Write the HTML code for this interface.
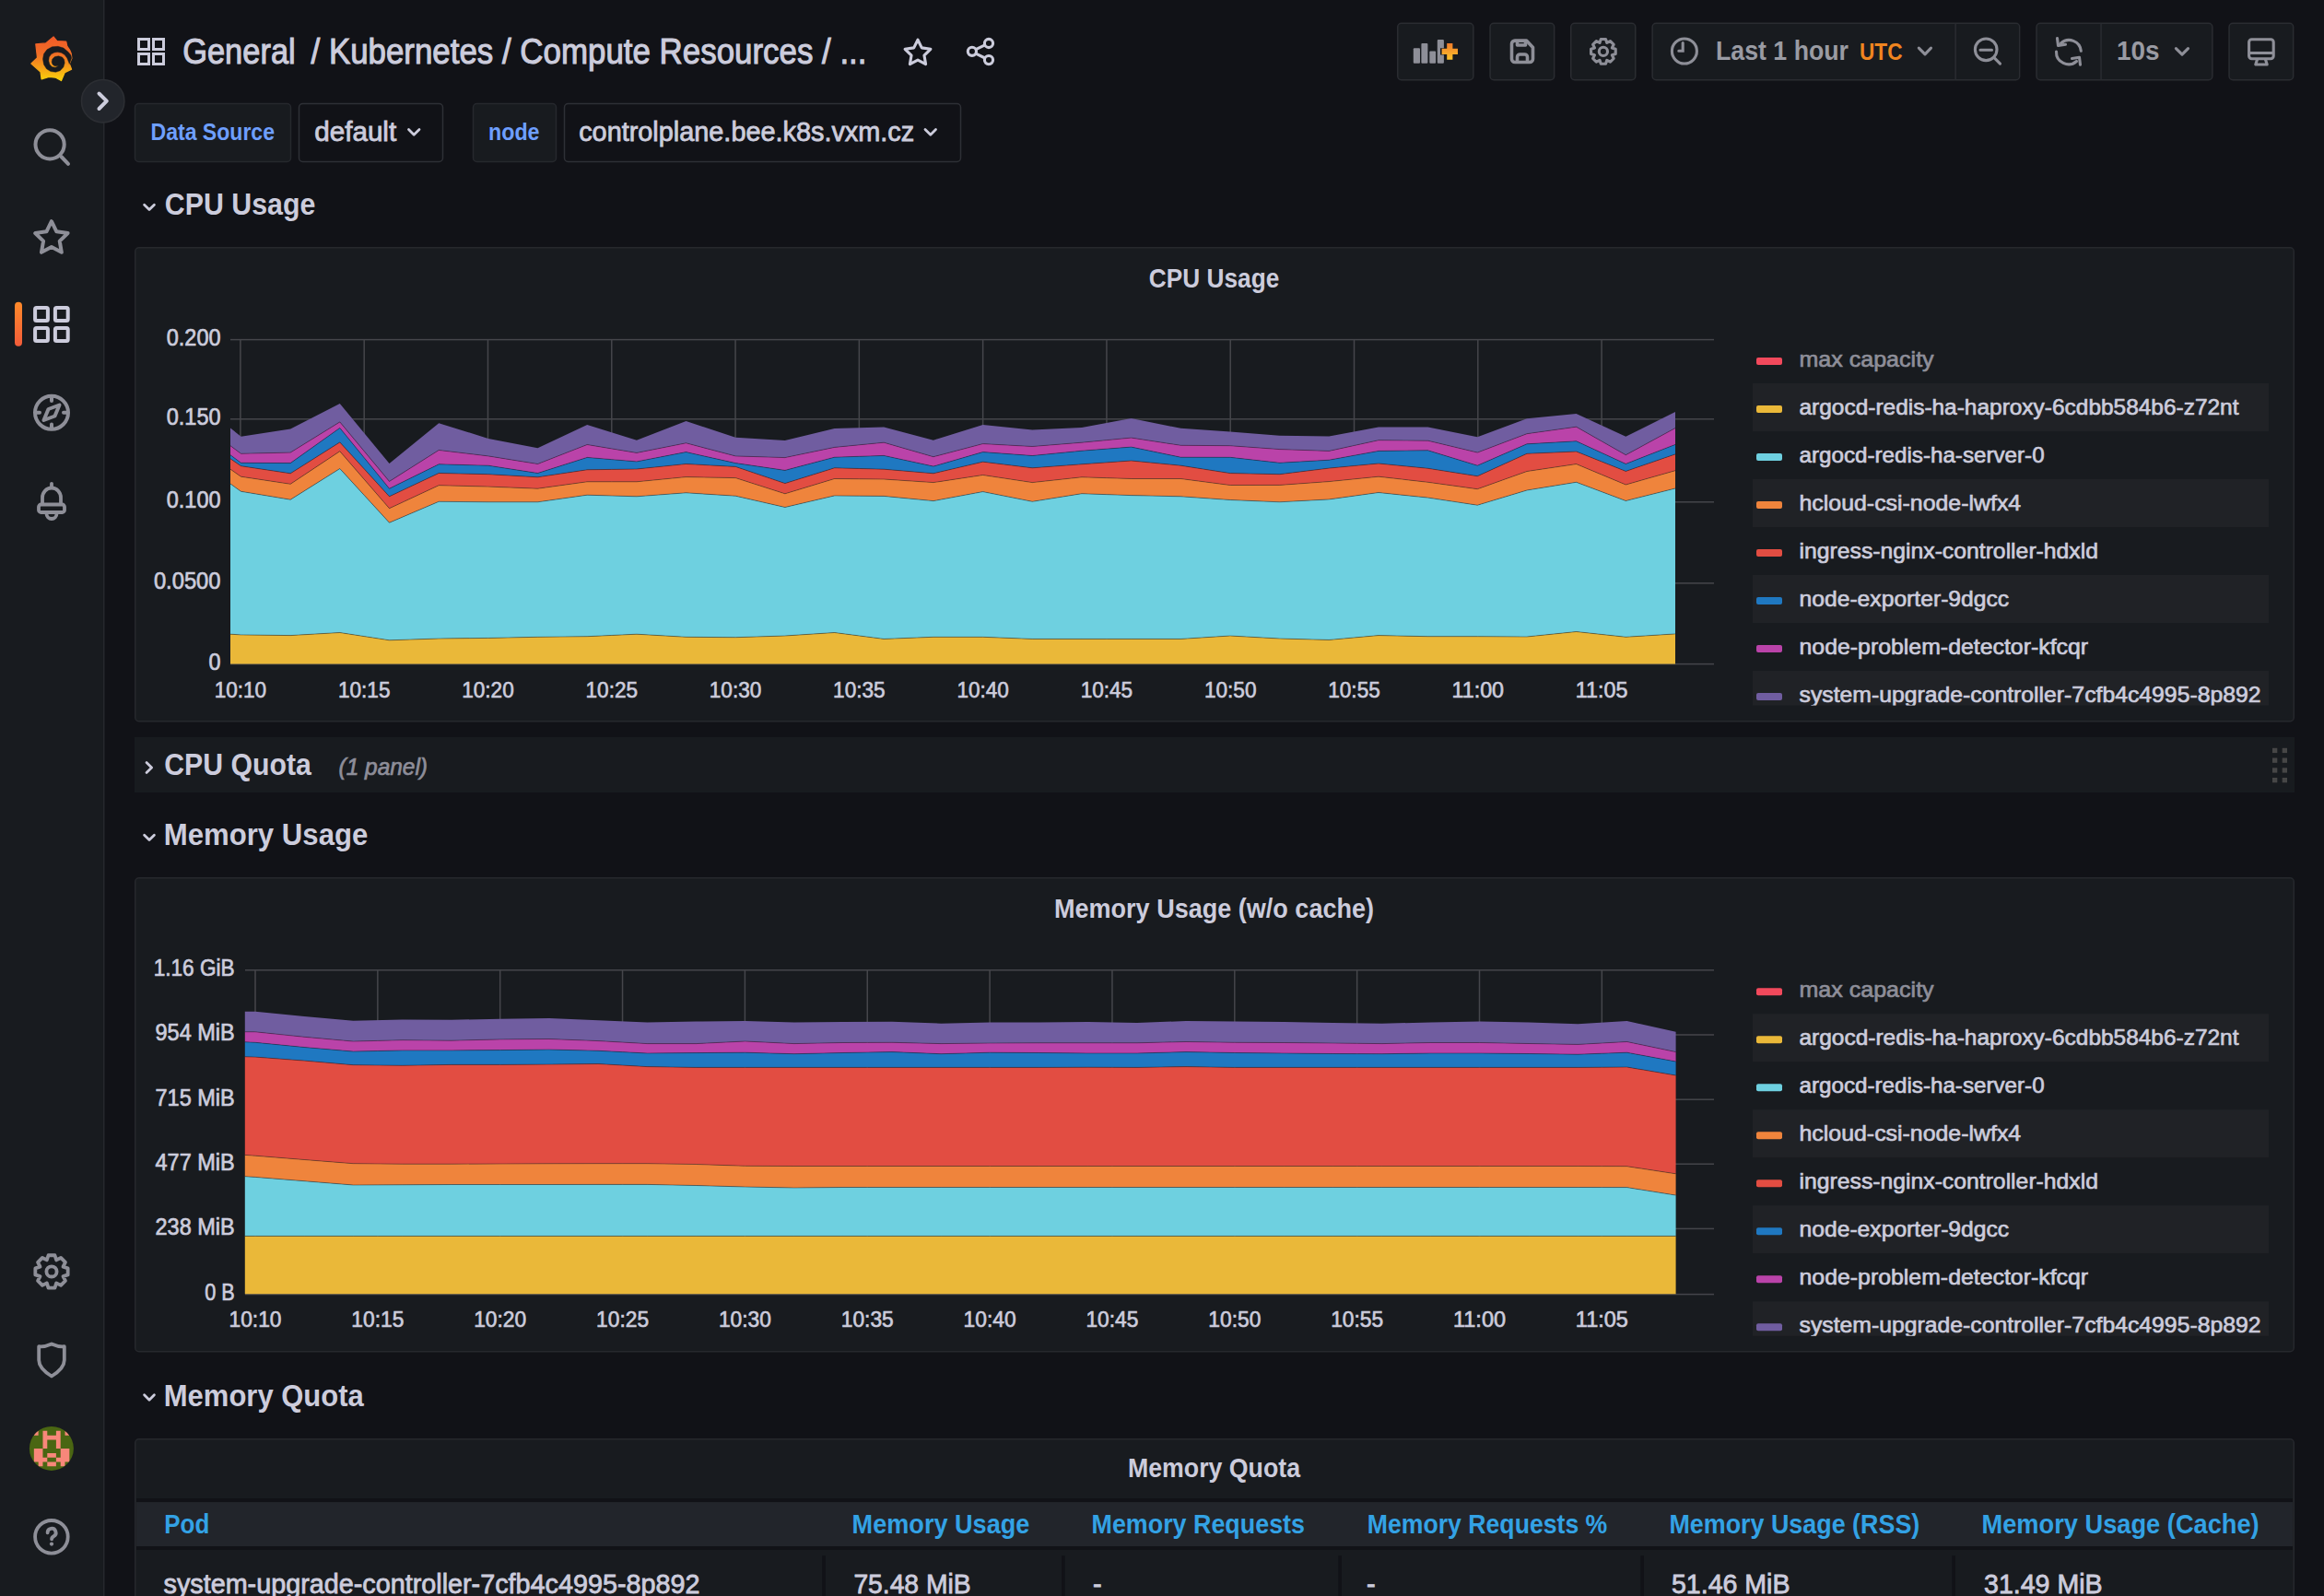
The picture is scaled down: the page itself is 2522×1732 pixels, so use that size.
<!DOCTYPE html>
<html><head><meta charset="utf-8"><title>Kubernetes / Compute Resources</title>
<style>html,body{margin:0;padding:0;background:#111217;overflow:hidden;width:2522px;height:1732px}svg{display:block}text{font-family:"Liberation Sans", sans-serif}</style>
</head><body><svg width="2522" height="1732" viewBox="0 0 2522 1732" font-family='"Liberation Sans", sans-serif'><rect x="0" y="0" width="2522" height="1732" fill="#111217"/><rect x="0" y="0" width="112" height="1732" fill="#181b1f"/><rect x="112" y="0" width="1.5" height="1732" fill="#26282d"/><g fill="none" stroke="#ccccdc" stroke-width="3"><rect x="150.5" y="42.5" width="11" height="11"/><rect x="166.5" y="42.5" width="11" height="11"/><rect x="150.5" y="58.5" width="11" height="11"/><rect x="166.5" y="58.5" width="11" height="11"/></g><text x="198.20" y="68.5" font-size="39" fill="#ccccdc" font-weight="normal" font-style="normal" text-anchor="start" textLength="122.50" lengthAdjust="spacingAndGlyphs"  stroke="#ccccdc" stroke-width="1.09">General</text><text x="337.50" y="68.5" font-size="39" fill="#ccccdc" font-weight="normal" font-style="normal" text-anchor="start" textLength="603.00" lengthAdjust="spacingAndGlyphs"  stroke="#ccccdc" stroke-width="1.09">/ Kubernetes / Compute Resources / ...</text><rect x="146.5" y="112.5" width="169" height="63" rx="4" fill="#181b1f" stroke="#26282d" stroke-width="1.5"/><text x="163.50" y="152" font-size="25.5" fill="#6e9fff" font-weight="bold" font-style="normal" text-anchor="start" textLength="134.50" lengthAdjust="spacingAndGlyphs" >Data Source</text><rect x="324.5" y="112.5" width="156" height="63" rx="4" fill="#111217" stroke="#2e3036" stroke-width="1.5"/><text x="341.20" y="152.5" font-size="29" fill="#ccccdc" font-weight="normal" font-style="normal" text-anchor="start" textLength="89.00" lengthAdjust="spacingAndGlyphs"  stroke="#ccccdc" stroke-width="0.81">default</text><rect x="513.5" y="112.5" width="90" height="63" rx="4" fill="#181b1f" stroke="#26282d" stroke-width="1.5"/><text x="530.00" y="152" font-size="25.5" fill="#6e9fff" font-weight="bold" font-style="normal" text-anchor="start" textLength="55.50" lengthAdjust="spacingAndGlyphs" >node</text><rect x="612.5" y="112.5" width="430" height="63" rx="4" fill="#111217" stroke="#2e3036" stroke-width="1.5"/><text x="628.20" y="152.5" font-size="29" fill="#ccccdc" font-weight="normal" font-style="normal" text-anchor="start" textLength="364.00" lengthAdjust="spacingAndGlyphs"  stroke="#ccccdc" stroke-width="0.81">controlplane.bee.k8s.vxm.cz</text><text x="178.80" y="232.8" font-size="32.5" fill="#ccccdc" font-weight="bold" font-style="normal" text-anchor="start" textLength="163.50" lengthAdjust="spacingAndGlyphs" >CPU Usage</text><rect x="146.75" y="268.75" width="2342.5" height="514" rx="4" fill="#181b1f" stroke="#26282d" stroke-width="1.5"/><text x="1246.80" y="311.8" font-size="29.5" fill="#ccccdc" font-weight="bold" font-style="normal" text-anchor="start" textLength="141.50" lengthAdjust="spacingAndGlyphs" >CPU Usage</text><rect x="146" y="800" width="2344" height="60" fill="#181b1f"/><text x="178.30" y="841.4" font-size="33" fill="#ccccdc" font-weight="bold" font-style="normal" text-anchor="start" textLength="159.50" lengthAdjust="spacingAndGlyphs" >CPU Quota</text><text x="367.50" y="841.4" font-size="26" fill="#8e8e99" font-weight="normal" font-style="italic" text-anchor="start" textLength="96.50" lengthAdjust="spacingAndGlyphs"  stroke="#8e8e99" stroke-width="0.73">(1 panel)</text><text x="177.80" y="917.3" font-size="33" fill="#ccccdc" font-weight="bold" font-style="normal" text-anchor="start" textLength="221.50" lengthAdjust="spacingAndGlyphs" >Memory Usage</text><rect x="146.75" y="952.75" width="2342.5" height="514" rx="4" fill="#181b1f" stroke="#26282d" stroke-width="1.5"/><text x="1144.00" y="995.5" font-size="29.8" fill="#ccccdc" font-weight="bold" font-style="normal" text-anchor="start" textLength="347.00" lengthAdjust="spacingAndGlyphs" >Memory Usage (w/o cache)</text><text x="177.80" y="1526" font-size="33" fill="#ccccdc" font-weight="bold" font-style="normal" text-anchor="start" textLength="217.00" lengthAdjust="spacingAndGlyphs" >Memory Quota</text><rect x="146.75" y="1561.75" width="2342.5" height="400" rx="4" fill="#181b1f" stroke="#26282d" stroke-width="1.5"/><text x="1224.00" y="1603.3" font-size="30" fill="#ccccdc" font-weight="bold" font-style="normal" text-anchor="start" textLength="187.00" lengthAdjust="spacingAndGlyphs" >Memory Quota</text><defs><linearGradient id="glogo" x1="0" y1="0" x2="0" y2="1"><stop offset="0" stop-color="#f05a28"/><stop offset="0.4" stop-color="#f16f26"/><stop offset="1" stop-color="#fbd20a"/></linearGradient><linearGradient id="gbar" x1="0" y1="0" x2="0" y2="1"><stop offset="0" stop-color="#ff8a2a"/><stop offset="1" stop-color="#f25c3a"/></linearGradient><linearGradient id="gplus" x1="0" y1="0" x2="0" y2="1"><stop offset="0" stop-color="#f07b2a"/><stop offset="1" stop-color="#fcc42c"/></linearGradient></defs><path d="M58.07,40.0 L61.9,44.6 L71.75,45.1 L72.8,50.1 L75.5,54.0 L77.2,58.0 L77.9,63.2 L75.3,69.3 L77.6,75.1 L70.35,78.6 L66.5,87.6 L60.5,84.2 L53.2,83.4 L45.1,85.8 L44.0,78.1 L33.9,69.0 L40.5,62.7 L38.8,47.9 L49.6,46.9Z" fill="url(#glogo)" stroke="url(#glogo)" stroke-width="1.2" stroke-linejoin="round"/><path d="M77.66,62.9 L76.9,59.8 L74.2,56.5 L68.9,52.0 L63,50.3 L56.5,50.8 L51,53.8 L47.5,58.5 L46.5,64 L47.5,70 L50.5,74.8 L55,77.6 L60.5,78.3 L65.2,76.8 L68.9,72.8 L70.2,68.2 L69.6,64.5 L67.5,62 L63.5,60.8 L59.5,61.5 L56.8,64 L56.1,67.2 L57,70 L59.5,71.8 L63.6,71.6 L60,73.3 L56.5,72.5 L54,70 L52.8,66 L53.3,62 L55.5,58.8 L59,57 L62.5,56.6 L66.5,57.2 L70,59.3 L72.8,63 L74.6,67.5 L75.3,69.5 L76.6,66Z" fill="#181b1f" stroke="#181b1f" stroke-width="0.4" stroke-linejoin="round"/><circle cx="111.7" cy="109.7" r="23.2" fill="#22252b" stroke="#2c2e33" stroke-width="1.6"/><path d="M107.5,101.5 L115.8,109.7 L107.5,118" fill="none" stroke="#ccccdc" stroke-width="4" stroke-linecap="round" stroke-linejoin="round"/><g fill="none" stroke="#8e8f98" stroke-width="4" stroke-linecap="round"><circle cx="54.1" cy="156.8" r="15.6"/><path d="M66.5,170 L74,177.8"/></g><path d="M55.90,240.20 L61.37,251.28 L73.59,253.05 L64.74,261.67 L66.83,273.85 L55.90,268.10 L44.97,273.85 L47.06,261.67 L38.21,253.05 L50.43,251.28Z" fill="none" stroke="#8e8f98" stroke-width="4" stroke-linejoin="round"/><rect x="16" y="327.7" width="8" height="48" rx="4" fill="url(#gbar)"/><g fill="none" stroke="#ccccdc" stroke-width="4"><rect x="38.1" y="334" width="13.8" height="13.9" rx="1.5"/><rect x="59.9" y="334" width="13.8" height="13.9" rx="1.5"/><rect x="38.1" y="356.1" width="13.8" height="13.9" rx="1.5"/><rect x="59.9" y="356.1" width="13.8" height="13.9" rx="1.5"/></g><g fill="none" stroke="#8e8f98" stroke-width="4" stroke-linecap="round"><circle cx="56" cy="447.8" r="18"/><path d="M56,431.5 V435 M56,460.5 V464 M39.5,447.8 H43 M69,447.8 H72.5"/></g><path d="M64.5,439.5 L59.5,451.5 L47.5,456 L52.5,444 Z" fill="none" stroke="#8e8f98" stroke-width="4" stroke-linejoin="round"/><g fill="none" stroke="#8e8f98" stroke-width="3.8" stroke-linecap="round" stroke-linejoin="round"><path d="M56,524.8 V528.5"/><path d="M46,547 V540 A10,10.5 0 0 1 66,540 V547"/><rect x="42" y="547.5" width="28" height="8.5" rx="2.5"/><path d="M50.5,557.5 A5.5,5.5 0 0 0 61.5,557.5"/></g><path d="M50.83,1367.43 L52.52,1362.24 L59.48,1362.24 L61.17,1367.43 L61.17,1367.43 L66.03,1364.95 L70.95,1369.87 L68.47,1374.73 L68.47,1374.73 L73.66,1376.42 L73.66,1383.38 L68.47,1385.07 L68.47,1385.07 L70.95,1389.93 L66.03,1394.85 L61.17,1392.37 L61.17,1392.37 L59.48,1397.56 L52.52,1397.56 L50.83,1392.37 L50.83,1392.37 L45.97,1394.85 L41.05,1389.93 L43.53,1385.07 L43.53,1385.07 L38.34,1383.38 L38.34,1376.42 L43.53,1374.73 L43.53,1374.73 L41.05,1369.87 L45.97,1364.95 L50.83,1367.43Z" fill="none" stroke="#8e8f98" stroke-width="3.8" stroke-linejoin="round"/><circle cx="56" cy="1379.9" r="5.6" fill="none" stroke="#8e8f98" stroke-width="3.8"/><path d="M56,1458.5 Q48,1462 42.2,1461.2 V1476 Q42.2,1485 56,1493.5 Q69.8,1485 69.8,1476 V1461.2 Q64,1462 56,1458.5 Z" fill="none" stroke="#8e8f98" stroke-width="3.8" stroke-linejoin="round"/><clipPath id="avc"><circle cx="55.9" cy="1571.9" r="24"/></clipPath><g clip-path="url(#avc)"><rect x="31" y="1547" width="50" height="50" fill="#4a6612"/><path d="M36.84,1552.83h4.81v4.81h-4.81ZM46.47,1552.83h4.81v4.81h-4.81ZM60.90,1552.83h4.81v4.81h-4.81ZM70.53,1552.83h4.81v4.81h-4.81ZM46.47,1557.64h4.81v4.81h-4.81ZM51.28,1557.64h4.81v4.81h-4.81ZM56.09,1557.64h4.81v4.81h-4.81ZM60.90,1557.64h4.81v4.81h-4.81ZM46.47,1562.46h4.81v4.81h-4.81ZM60.90,1562.46h4.81v4.81h-4.81ZM46.47,1567.27h4.81v4.81h-4.81ZM60.90,1567.27h4.81v4.81h-4.81ZM36.84,1572.08h4.81v4.81h-4.81ZM41.65,1572.08h4.81v4.81h-4.81ZM65.71,1572.08h4.81v4.81h-4.81ZM70.53,1572.08h4.81v4.81h-4.81ZM36.84,1576.89h4.81v4.81h-4.81ZM41.65,1576.89h4.81v4.81h-4.81ZM51.28,1576.89h4.81v4.81h-4.81ZM56.09,1576.89h4.81v4.81h-4.81ZM65.71,1576.89h4.81v4.81h-4.81ZM70.53,1576.89h4.81v4.81h-4.81ZM36.84,1581.70h4.81v4.81h-4.81ZM41.65,1581.70h4.81v4.81h-4.81ZM46.47,1581.70h4.81v4.81h-4.81ZM60.90,1581.70h4.81v4.81h-4.81ZM65.71,1581.70h4.81v4.81h-4.81ZM70.53,1581.70h4.81v4.81h-4.81ZM41.65,1586.52h4.81v4.81h-4.81ZM51.28,1586.52h4.81v4.81h-4.81ZM56.09,1586.52h4.81v4.81h-4.81ZM65.71,1586.52h4.81v4.81h-4.81Z" fill="#f8877a"/></g><g fill="none" stroke="#8e8f98" stroke-width="3.8" stroke-linecap="round"><circle cx="55.9" cy="1667.8" r="17.8"/><path d="M51.6,1663.3 A4.5,4.5 0 1 1 58.2,1667.2 Q56.1,1668.3 56.1,1670.3"/></g><circle cx="56" cy="1675.6" r="2.1" fill="#8e8f98"/><path d="M996.00,43.20 L1000.29,51.89 L1009.89,53.29 L1002.94,60.06 L1004.58,69.61 L996.00,65.10 L987.42,69.61 L989.06,60.06 L982.11,53.29 L991.71,51.89Z" fill="none" stroke="#ccccdc" stroke-width="3.1" stroke-linejoin="round"/><g fill="none" stroke="#ccccdc" stroke-width="3.1"><circle cx="1073" cy="47" r="4.6"/><circle cx="1054.9" cy="55.8" r="4.6"/><circle cx="1073" cy="65.1" r="4.6"/><path d="M1059,53.6 L1068.8,48.9 M1059,58.1 L1068.8,63"/></g><rect x="1516.75" y="25.25" width="82.09999999999991" height="61.5" rx="4" fill="#181b1f" stroke="#2a2c31" stroke-width="1.5"/><rect x="1617.05" y="25.25" width="69.60000000000014" height="61.5" rx="4" fill="#181b1f" stroke="#2a2c31" stroke-width="1.5"/><rect x="1704.75" y="25.25" width="70.0" height="61.5" rx="4" fill="#181b1f" stroke="#2a2c31" stroke-width="1.5"/><rect x="1793.15" y="25.25" width="398.5" height="61.5" rx="4" fill="#181b1f" stroke="#2a2c31" stroke-width="1.5"/><rect x="2121.4" y="25.5" width="1.5" height="61" fill="#2a2c31"/><rect x="2210.05" y="25.25" width="190.79999999999973" height="61.5" rx="4" fill="#181b1f" stroke="#2a2c31" stroke-width="1.5"/><rect x="2279.3" y="25.5" width="1.5" height="61" fill="#2a2c31"/><rect x="2419.05" y="25.25" width="69.59999999999991" height="61.5" rx="4" fill="#181b1f" stroke="#2a2c31" stroke-width="1.5"/><g fill="#8e8f98"><rect x="1533.8" y="52.2" width="7.2" height="16.5" rx="1"/><rect x="1542.4" y="46.9" width="7" height="21.8" rx="1"/><rect x="1551.3" y="55.6" width="6.8" height="13.1" rx="1"/><rect x="1559.8" y="42.9" width="7.1" height="25.8" rx="1"/></g><path d="M1563,52.2 H1583.5 V59.5 H1563 Z M1569.5,45.5 H1577 V66.3 H1569.5 Z" fill="#181b1f"/><path d="M1564.6,52.8 H1582 V59 H1576.4 V64.8 H1570.2 V59 H1564.6 Z M1570.2,46.9 H1576.4 V52.8 H1570.2 Z" fill="url(#gplus)"/><g fill="none" stroke="#8e8f98" stroke-width="3.6" stroke-linejoin="round"><path d="M1644,44.1 H1656.5 L1663.5,51.5 V64 A3.5,3.5 0 0 1 1660,67.5 H1644 A3.5,3.5 0 0 1 1640.5,64 V47.6 A3.5,3.5 0 0 1 1644,44.1 Z"/><path d="M1646.5,44.5 V49 H1655.5 V44.5"/><path d="M1646.5,67.3 V62 A3,3 0 0 1 1649.5,59 H1654.5 A3,3 0 0 1 1657.5,62 V67.3"/></g><path d="M1736.00,46.48 L1737.27,42.56 L1742.53,42.56 L1743.80,46.48 L1743.80,46.48 L1747.48,44.61 L1751.19,48.32 L1749.32,52.00 L1749.32,52.00 L1753.24,53.27 L1753.24,58.53 L1749.32,59.80 L1749.32,59.80 L1751.19,63.48 L1747.48,67.19 L1743.80,65.32 L1743.80,65.32 L1742.53,69.24 L1737.27,69.24 L1736.00,65.32 L1736.00,65.32 L1732.32,67.19 L1728.61,63.48 L1730.48,59.80 L1730.48,59.80 L1726.56,58.53 L1726.56,53.27 L1730.48,52.00 L1730.48,52.00 L1728.61,48.32 L1732.32,44.61 L1736.00,46.48Z" fill="none" stroke="#8e8f98" stroke-width="3.1" stroke-linejoin="round"/><circle cx="1739.9" cy="55.9" r="4.6" fill="none" stroke="#8e8f98" stroke-width="3.1"/><g fill="none" stroke="#8e8f98" stroke-width="3.1" stroke-linecap="round"><circle cx="1827.9" cy="55.5" r="13.5"/><path d="M1826.2,46.5 V55.2 H1821.8"/></g><text x="1862.00" y="64.9" font-size="30" fill="#9a9ba3" font-weight="bold" font-style="normal" text-anchor="start" textLength="144.00" lengthAdjust="spacingAndGlyphs" >Last 1 hour</text><text x="2018.00" y="64.9" font-size="26" fill="#f0851f" font-weight="bold" font-style="normal" text-anchor="start" textLength="46.50" lengthAdjust="spacingAndGlyphs" >UTC</text><path d="M2082.3,52.2 L2089,58.8 L2095.5,52.2" fill="none" stroke="#8e8f98" stroke-width="3.1" stroke-linecap="round" stroke-linejoin="round"/><g fill="none" stroke="#8e8f98" stroke-width="3.1" stroke-linecap="round"><circle cx="2155.2" cy="53.8" r="11.8"/><path d="M2149,54.2 H2161.5 M2163.8,62.4 L2170.5,69.2"/></g><g fill="none" stroke="#8e8f98" stroke-width="3.1" stroke-linecap="round" stroke-linejoin="round"><path d="M2236.5,47 A13,13 0 0 1 2258.3,55.3"/><path d="M2231.5,56 A13.3,13.3 0 0 0 2253.5,66.5"/><path d="M2232.5,41.5 L2233.5,49.5 L2241.5,48.2"/><path d="M2257.5,70.3 L2256.5,62.3 L2248.5,63.5"/></g><text x="2297.00" y="65.2" font-size="30" fill="#9a9ba3" font-weight="bold" font-style="normal" text-anchor="start" textLength="46.50" lengthAdjust="spacingAndGlyphs" >10s</text><path d="M2361.4,52.7 L2368,59.2 L2374.5,52.7" fill="none" stroke="#8e8f98" stroke-width="3.1" stroke-linecap="round" stroke-linejoin="round"/><g fill="none" stroke="#8e8f98" stroke-width="3.1" stroke-linejoin="round"><rect x="2440.6" y="42.7" width="26.6" height="21" rx="3"/><path d="M2440.6,57.5 H2467.2"/><path d="M2449.5,64.5 L2447.8,70 H2460.2 L2458.5,64.5"/></g><path d="M443.5,140.5 L449.2,146.2 L455,140.5" fill="none" stroke="#ccccdc" stroke-width="2.8" stroke-linecap="round" stroke-linejoin="round"/><path d="M1004,140.5 L1009.8,146.2 L1015.5,140.5" fill="none" stroke="#ccccdc" stroke-width="2.8" stroke-linecap="round" stroke-linejoin="round"/><g fill="none" stroke="#ccccdc" stroke-width="2.8" stroke-linecap="round" stroke-linejoin="round"><path d="M156.6,222.3 L162,227.6 L167.4,222.3"/><path d="M159,827.6 L164.6,833 L159,838.4"/><path d="M156.6,906.2 L162,911.6 L167.4,906.2"/><path d="M156.6,1513.8 L162,1519.2 L167.4,1513.8"/></g><rect x="2466.0" y="811.8" width="5.3" height="5.3" fill="#464646"/><rect x="2476.7" y="811.8" width="5.3" height="5.3" fill="#464646"/><rect x="2466.0" y="822.5" width="5.3" height="5.3" fill="#464646"/><rect x="2476.7" y="822.5" width="5.3" height="5.3" fill="#464646"/><rect x="2466.0" y="833.3" width="5.3" height="5.3" fill="#464646"/><rect x="2476.7" y="833.3" width="5.3" height="5.3" fill="#464646"/><rect x="2466.0" y="844.0" width="5.3" height="5.3" fill="#464646"/><rect x="2476.7" y="844.0" width="5.3" height="5.3" fill="#464646"/><rect x="250" y="367.85" width="1610" height="1.5" fill="#45464b"/><rect x="250" y="454.05" width="1610" height="1.5" fill="#45464b"/><rect x="250" y="544.05" width="1610" height="1.5" fill="#45464b"/><rect x="250" y="632.15" width="1610" height="1.5" fill="#45464b"/><rect x="250" y="719.85" width="1610" height="1.5" fill="#45464b"/><rect x="260.15" y="368.6" width="1.5" height="352.0" fill="#45464b"/><rect x="394.44" y="368.6" width="1.5" height="352.0" fill="#45464b"/><rect x="528.73" y="368.6" width="1.5" height="352.0" fill="#45464b"/><rect x="663.02" y="368.6" width="1.5" height="352.0" fill="#45464b"/><rect x="797.31" y="368.6" width="1.5" height="352.0" fill="#45464b"/><rect x="931.60" y="368.6" width="1.5" height="352.0" fill="#45464b"/><rect x="1065.89" y="368.6" width="1.5" height="352.0" fill="#45464b"/><rect x="1200.18" y="368.6" width="1.5" height="352.0" fill="#45464b"/><rect x="1334.47" y="368.6" width="1.5" height="352.0" fill="#45464b"/><rect x="1468.76" y="368.6" width="1.5" height="352.0" fill="#45464b"/><rect x="1603.05" y="368.6" width="1.5" height="352.0" fill="#45464b"/><rect x="1737.34" y="368.6" width="1.5" height="352.0" fill="#45464b"/><path d="M250.0,464.4 L261.5,473.7 L315.2,465.6 L368.8,438.0 L422.5,503.1 L476.2,459.2 L529.9,475.9 L583.5,486.3 L637.2,461.1 L690.9,477.7 L744.5,457.0 L798.2,474.7 L851.9,478.0 L905.6,465.1 L959.2,463.4 L1012.9,477.7 L1066.6,461.0 L1120.3,466.5 L1173.9,463.9 L1227.6,453.9 L1281.3,464.8 L1334.9,468.6 L1388.6,472.8 L1442.3,473.4 L1496.0,463.4 L1549.6,463.4 L1603.3,474.2 L1657.0,454.2 L1710.6,448.9 L1764.3,473.8 L1818.0,446.9 L1818.0,464.6 L1764.3,493.7 L1710.6,463.2 L1657.0,470.7 L1603.3,491.1 L1549.6,478.2 L1496.0,477.7 L1442.3,489.4 L1388.6,487.6 L1334.9,483.7 L1281.3,483.3 L1227.6,475.1 L1173.9,480.2 L1120.3,484.5 L1066.6,481.6 L1012.9,495.7 L959.2,480.2 L905.6,485.4 L851.9,496.6 L798.2,494.9 L744.5,480.8 L690.9,491.4 L637.2,482.5 L583.5,503.5 L529.9,494.9 L476.2,488.5 L422.5,522.4 L368.8,457.9 L315.2,491.1 L261.5,492.3 L250.0,483.7Z" fill="#705da0"/><path d="M250.0,483.7 L261.5,492.3 L315.2,491.1 L368.8,457.9 L422.5,522.4 L476.2,488.5 L529.9,494.9 L583.5,503.5 L637.2,482.5 L690.9,491.4 L744.5,480.8 L798.2,494.9 L851.9,496.6 L905.6,485.4 L959.2,480.2 L1012.9,495.7 L1066.6,481.6 L1120.3,484.5 L1173.9,480.2 L1227.6,475.1 L1281.3,483.3 L1334.9,483.7 L1388.6,487.6 L1442.3,489.4 L1496.0,477.7 L1549.6,478.2 L1603.3,491.1 L1657.0,470.7 L1710.6,463.2 L1764.3,493.7 L1818.0,464.6 L1818.0,482.4 L1764.3,503.4 L1710.6,478.8 L1657.0,481.8 L1603.3,505.2 L1549.6,488.8 L1496.0,489.4 L1442.3,499.2 L1388.6,502.3 L1334.9,496.3 L1281.3,496.2 L1227.6,485.1 L1173.9,489.2 L1120.3,494.5 L1066.6,490.6 L1012.9,506.1 L959.2,494.4 L905.6,496.2 L851.9,510.4 L798.2,502.6 L744.5,490.6 L690.9,500.9 L637.2,496.4 L583.5,513.5 L529.9,505.2 L476.2,503.8 L422.5,530.2 L368.8,464.4 L315.2,502.6 L261.5,502.3 L250.0,493.7Z" fill="#ba43a9"/><path d="M250.0,493.7 L261.5,502.3 L315.2,502.6 L368.8,464.4 L422.5,530.2 L476.2,503.8 L529.9,505.2 L583.5,513.5 L637.2,496.4 L690.9,500.9 L744.5,490.6 L798.2,502.6 L851.9,510.4 L905.6,496.2 L959.2,494.4 L1012.9,506.1 L1066.6,490.6 L1120.3,494.5 L1173.9,489.2 L1227.6,485.1 L1281.3,496.2 L1334.9,496.3 L1388.6,502.3 L1442.3,499.2 L1496.0,489.4 L1549.6,488.8 L1603.3,505.2 L1657.0,481.8 L1710.6,478.8 L1764.3,503.4 L1818.0,482.4 L1818.0,492.9 L1764.3,511.4 L1710.6,490.0 L1657.0,492.3 L1603.3,516.7 L1549.6,508.3 L1496.0,503.0 L1442.3,508.1 L1388.6,514.7 L1334.9,513.6 L1281.3,505.2 L1227.6,500.0 L1173.9,503.8 L1120.3,507.8 L1066.6,501.2 L1012.9,513.8 L959.2,509.2 L905.6,507.8 L851.9,524.6 L798.2,506.4 L744.5,503.5 L690.9,509.0 L637.2,509.8 L583.5,517.8 L529.9,514.7 L476.2,513.5 L422.5,538.8 L368.8,479.9 L315.2,513.8 L261.5,505.7 L250.0,497.8Z" fill="#1f78c1"/><path d="M250.0,497.8 L261.5,505.7 L315.2,513.8 L368.8,479.9 L422.5,538.8 L476.2,513.5 L529.9,514.7 L583.5,517.8 L637.2,509.8 L690.9,509.0 L744.5,503.5 L798.2,506.4 L851.9,524.6 L905.6,507.8 L959.2,509.2 L1012.9,513.8 L1066.6,501.2 L1120.3,507.8 L1173.9,503.8 L1227.6,500.0 L1281.3,505.2 L1334.9,513.6 L1388.6,514.7 L1442.3,508.1 L1496.0,503.0 L1549.6,508.3 L1603.3,516.7 L1657.0,492.3 L1710.6,490.0 L1764.3,511.4 L1818.0,492.9 L1818.0,510.7 L1764.3,526.0 L1710.6,503.6 L1657.0,511.5 L1603.3,530.7 L1549.6,523.3 L1496.0,517.2 L1442.3,522.6 L1388.6,526.4 L1334.9,526.5 L1281.3,519.5 L1227.6,519.5 L1173.9,517.8 L1120.3,523.6 L1066.6,515.5 L1012.9,523.6 L959.2,520.0 L905.6,519.5 L851.9,535.8 L798.2,518.6 L744.5,517.6 L690.9,522.8 L637.2,522.8 L583.5,530.2 L529.9,528.1 L476.2,526.7 L422.5,551.7 L368.8,489.7 L315.2,525.3 L261.5,517.2 L250.0,509.2Z" fill="#e24d42"/><path d="M250.0,509.2 L261.5,517.2 L315.2,525.3 L368.8,489.7 L422.5,551.7 L476.2,526.7 L529.9,528.1 L583.5,530.2 L637.2,522.8 L690.9,522.8 L744.5,517.6 L798.2,518.6 L851.9,535.8 L905.6,519.5 L959.2,520.0 L1012.9,523.6 L1066.6,515.5 L1120.3,523.6 L1173.9,517.8 L1227.6,519.5 L1281.3,519.5 L1334.9,526.5 L1388.6,526.4 L1442.3,522.6 L1496.0,517.2 L1549.6,523.3 L1603.3,530.7 L1657.0,511.5 L1710.6,503.6 L1764.3,526.0 L1818.0,510.7 L1818.0,530.0 L1764.3,543.5 L1710.6,523.3 L1657.0,532.0 L1603.3,548.2 L1549.6,540.1 L1496.0,534.5 L1442.3,541.9 L1388.6,544.8 L1334.9,542.5 L1281.3,538.8 L1227.6,537.6 L1173.9,535.7 L1120.3,544.3 L1066.6,533.6 L1012.9,543.6 L959.2,538.4 L905.6,537.9 L851.9,550.5 L798.2,538.2 L744.5,534.8 L690.9,538.8 L637.2,537.2 L583.5,544.8 L529.9,544.8 L476.2,544.3 L422.5,567.2 L368.8,508.6 L315.2,542.2 L261.5,533.3 L250.0,525.0Z" fill="#ef843c"/><path d="M250.0,525.0 L261.5,533.3 L315.2,542.2 L368.8,508.6 L422.5,567.2 L476.2,544.3 L529.9,544.8 L583.5,544.8 L637.2,537.2 L690.9,538.8 L744.5,534.8 L798.2,538.2 L851.9,550.5 L905.6,537.9 L959.2,538.4 L1012.9,543.6 L1066.6,533.6 L1120.3,544.3 L1173.9,535.7 L1227.6,537.6 L1281.3,538.8 L1334.9,542.5 L1388.6,544.8 L1442.3,541.9 L1496.0,534.5 L1549.6,540.1 L1603.3,548.2 L1657.0,532.0 L1710.6,523.3 L1764.3,543.5 L1818.0,530.0 L1818.0,687.9 L1764.3,691.3 L1710.6,685.5 L1657.0,691.0 L1603.3,690.7 L1549.6,690.7 L1496.0,689.6 L1442.3,694.4 L1388.6,693.0 L1334.9,690.0 L1281.3,693.4 L1227.6,693.4 L1173.9,693.4 L1120.3,693.4 L1066.6,691.3 L1012.9,691.3 L959.2,693.4 L905.6,686.5 L851.9,690.0 L798.2,691.7 L744.5,691.3 L690.9,688.2 L637.2,690.7 L583.5,691.3 L529.9,692.4 L476.2,693.0 L422.5,694.8 L368.8,686.5 L315.2,689.6 L261.5,688.9 L250.0,688.2Z" fill="#6ed0e0"/><path d="M250.0,688.2 L261.5,688.9 L315.2,689.6 L368.8,686.5 L422.5,694.8 L476.2,693.0 L529.9,692.4 L583.5,691.3 L637.2,690.7 L690.9,688.2 L744.5,691.3 L798.2,691.7 L851.9,690.0 L905.6,686.5 L959.2,693.4 L1012.9,691.3 L1066.6,691.3 L1120.3,693.4 L1173.9,693.4 L1227.6,693.4 L1281.3,693.4 L1334.9,690.0 L1388.6,693.0 L1442.3,694.4 L1496.0,689.6 L1549.6,690.7 L1603.3,690.7 L1657.0,691.0 L1710.6,685.5 L1764.3,691.3 L1818.0,687.9 L1818.0,720.5 L1764.3,720.5 L1710.6,720.5 L1657.0,720.5 L1603.3,720.5 L1549.6,720.5 L1496.0,720.5 L1442.3,720.5 L1388.6,720.5 L1334.9,720.5 L1281.3,720.5 L1227.6,720.5 L1173.9,720.5 L1120.3,720.5 L1066.6,720.5 L1012.9,720.5 L959.2,720.5 L905.6,720.5 L851.9,720.5 L798.2,720.5 L744.5,720.5 L690.9,720.5 L637.2,720.5 L583.5,720.5 L529.9,720.5 L476.2,720.5 L422.5,720.5 L368.8,720.5 L315.2,720.5 L261.5,720.5 L250.0,720.5Z" fill="#eab839"/><path d="M250.0,483.7 L261.5,492.3 L315.2,491.1 L368.8,457.9 L422.5,522.4 L476.2,488.5 L529.9,494.9 L583.5,503.5 L637.2,482.5 L690.9,491.4 L744.5,480.8 L798.2,494.9 L851.9,496.6 L905.6,485.4 L959.2,480.2 L1012.9,495.7 L1066.6,481.6 L1120.3,484.5 L1173.9,480.2 L1227.6,475.1 L1281.3,483.3 L1334.9,483.7 L1388.6,487.6 L1442.3,489.4 L1496.0,477.7 L1549.6,478.2 L1603.3,491.1 L1657.0,470.7 L1710.6,463.2 L1764.3,493.7 L1818.0,464.6" fill="none" stroke="rgba(20,20,30,0.45)" stroke-width="0.9"/><path d="M250.0,493.7 L261.5,502.3 L315.2,502.6 L368.8,464.4 L422.5,530.2 L476.2,503.8 L529.9,505.2 L583.5,513.5 L637.2,496.4 L690.9,500.9 L744.5,490.6 L798.2,502.6 L851.9,510.4 L905.6,496.2 L959.2,494.4 L1012.9,506.1 L1066.6,490.6 L1120.3,494.5 L1173.9,489.2 L1227.6,485.1 L1281.3,496.2 L1334.9,496.3 L1388.6,502.3 L1442.3,499.2 L1496.0,489.4 L1549.6,488.8 L1603.3,505.2 L1657.0,481.8 L1710.6,478.8 L1764.3,503.4 L1818.0,482.4" fill="none" stroke="rgba(20,20,30,0.45)" stroke-width="0.9"/><path d="M250.0,497.8 L261.5,505.7 L315.2,513.8 L368.8,479.9 L422.5,538.8 L476.2,513.5 L529.9,514.7 L583.5,517.8 L637.2,509.8 L690.9,509.0 L744.5,503.5 L798.2,506.4 L851.9,524.6 L905.6,507.8 L959.2,509.2 L1012.9,513.8 L1066.6,501.2 L1120.3,507.8 L1173.9,503.8 L1227.6,500.0 L1281.3,505.2 L1334.9,513.6 L1388.6,514.7 L1442.3,508.1 L1496.0,503.0 L1549.6,508.3 L1603.3,516.7 L1657.0,492.3 L1710.6,490.0 L1764.3,511.4 L1818.0,492.9" fill="none" stroke="rgba(20,20,30,0.45)" stroke-width="0.9"/><path d="M250.0,509.2 L261.5,517.2 L315.2,525.3 L368.8,489.7 L422.5,551.7 L476.2,526.7 L529.9,528.1 L583.5,530.2 L637.2,522.8 L690.9,522.8 L744.5,517.6 L798.2,518.6 L851.9,535.8 L905.6,519.5 L959.2,520.0 L1012.9,523.6 L1066.6,515.5 L1120.3,523.6 L1173.9,517.8 L1227.6,519.5 L1281.3,519.5 L1334.9,526.5 L1388.6,526.4 L1442.3,522.6 L1496.0,517.2 L1549.6,523.3 L1603.3,530.7 L1657.0,511.5 L1710.6,503.6 L1764.3,526.0 L1818.0,510.7" fill="none" stroke="rgba(20,20,30,0.45)" stroke-width="0.9"/><path d="M250.0,525.0 L261.5,533.3 L315.2,542.2 L368.8,508.6 L422.5,567.2 L476.2,544.3 L529.9,544.8 L583.5,544.8 L637.2,537.2 L690.9,538.8 L744.5,534.8 L798.2,538.2 L851.9,550.5 L905.6,537.9 L959.2,538.4 L1012.9,543.6 L1066.6,533.6 L1120.3,544.3 L1173.9,535.7 L1227.6,537.6 L1281.3,538.8 L1334.9,542.5 L1388.6,544.8 L1442.3,541.9 L1496.0,534.5 L1549.6,540.1 L1603.3,548.2 L1657.0,532.0 L1710.6,523.3 L1764.3,543.5 L1818.0,530.0" fill="none" stroke="rgba(20,20,30,0.45)" stroke-width="0.9"/><path d="M250.0,688.2 L261.5,688.9 L315.2,689.6 L368.8,686.5 L422.5,694.8 L476.2,693.0 L529.9,692.4 L583.5,691.3 L637.2,690.7 L690.9,688.2 L744.5,691.3 L798.2,691.7 L851.9,690.0 L905.6,686.5 L959.2,693.4 L1012.9,691.3 L1066.6,691.3 L1120.3,693.4 L1173.9,693.4 L1227.6,693.4 L1281.3,693.4 L1334.9,690.0 L1388.6,693.0 L1442.3,694.4 L1496.0,689.6 L1549.6,690.7 L1603.3,690.7 L1657.0,691.0 L1710.6,685.5 L1764.3,691.3 L1818.0,687.9" fill="none" stroke="rgba(20,20,30,0.45)" stroke-width="0.9"/><text x="180.80" y="374.90000000000003" font-size="25.2" fill="#ccccdc" font-weight="normal" font-style="normal" text-anchor="start" textLength="58.70" lengthAdjust="spacingAndGlyphs"  stroke="#ccccdc" stroke-width="0.71">0.200</text><text x="180.80" y="461.1" font-size="25.2" fill="#ccccdc" font-weight="normal" font-style="normal" text-anchor="start" textLength="58.70" lengthAdjust="spacingAndGlyphs"  stroke="#ccccdc" stroke-width="0.71">0.150</text><text x="180.80" y="551.0999999999999" font-size="25.2" fill="#ccccdc" font-weight="normal" font-style="normal" text-anchor="start" textLength="58.70" lengthAdjust="spacingAndGlyphs"  stroke="#ccccdc" stroke-width="0.71">0.100</text><text x="166.90" y="639.1999999999999" font-size="25.2" fill="#ccccdc" font-weight="normal" font-style="normal" text-anchor="start" textLength="72.60" lengthAdjust="spacingAndGlyphs"  stroke="#ccccdc" stroke-width="0.71">0.0500</text><text x="226.50" y="726.9" font-size="25.2" fill="#ccccdc" font-weight="normal" font-style="normal" text-anchor="start" textLength="13.00" lengthAdjust="spacingAndGlyphs"  stroke="#ccccdc" stroke-width="0.71">0</text><text x="232.65" y="757" font-size="23.5" fill="#ccccdc" font-weight="normal" font-style="normal" text-anchor="start" textLength="56.50" lengthAdjust="spacingAndGlyphs"  stroke="#ccccdc" stroke-width="0.66">10:10</text><text x="366.94" y="757" font-size="23.5" fill="#ccccdc" font-weight="normal" font-style="normal" text-anchor="start" textLength="56.50" lengthAdjust="spacingAndGlyphs"  stroke="#ccccdc" stroke-width="0.66">10:15</text><text x="501.23" y="757" font-size="23.5" fill="#ccccdc" font-weight="normal" font-style="normal" text-anchor="start" textLength="56.50" lengthAdjust="spacingAndGlyphs"  stroke="#ccccdc" stroke-width="0.66">10:20</text><text x="635.52" y="757" font-size="23.5" fill="#ccccdc" font-weight="normal" font-style="normal" text-anchor="start" textLength="56.50" lengthAdjust="spacingAndGlyphs"  stroke="#ccccdc" stroke-width="0.66">10:25</text><text x="769.81" y="757" font-size="23.5" fill="#ccccdc" font-weight="normal" font-style="normal" text-anchor="start" textLength="56.50" lengthAdjust="spacingAndGlyphs"  stroke="#ccccdc" stroke-width="0.66">10:30</text><text x="904.10" y="757" font-size="23.5" fill="#ccccdc" font-weight="normal" font-style="normal" text-anchor="start" textLength="56.50" lengthAdjust="spacingAndGlyphs"  stroke="#ccccdc" stroke-width="0.66">10:35</text><text x="1038.39" y="757" font-size="23.5" fill="#ccccdc" font-weight="normal" font-style="normal" text-anchor="start" textLength="56.50" lengthAdjust="spacingAndGlyphs"  stroke="#ccccdc" stroke-width="0.66">10:40</text><text x="1172.68" y="757" font-size="23.5" fill="#ccccdc" font-weight="normal" font-style="normal" text-anchor="start" textLength="56.50" lengthAdjust="spacingAndGlyphs"  stroke="#ccccdc" stroke-width="0.66">10:45</text><text x="1306.97" y="757" font-size="23.5" fill="#ccccdc" font-weight="normal" font-style="normal" text-anchor="start" textLength="56.50" lengthAdjust="spacingAndGlyphs"  stroke="#ccccdc" stroke-width="0.66">10:50</text><text x="1441.26" y="757" font-size="23.5" fill="#ccccdc" font-weight="normal" font-style="normal" text-anchor="start" textLength="56.50" lengthAdjust="spacingAndGlyphs"  stroke="#ccccdc" stroke-width="0.66">10:55</text><text x="1575.55" y="757" font-size="23.5" fill="#ccccdc" font-weight="normal" font-style="normal" text-anchor="start" textLength="56.50" lengthAdjust="spacingAndGlyphs"  stroke="#ccccdc" stroke-width="0.66">11:00</text><text x="1709.84" y="757" font-size="23.5" fill="#ccccdc" font-weight="normal" font-style="normal" text-anchor="start" textLength="56.50" lengthAdjust="spacingAndGlyphs"  stroke="#ccccdc" stroke-width="0.66">11:05</text><rect x="266" y="1052.05" width="1594" height="1.5" fill="#45464b"/><rect x="266" y="1122.25" width="1594" height="1.5" fill="#45464b"/><rect x="266" y="1192.45" width="1594" height="1.5" fill="#45464b"/><rect x="266" y="1262.45" width="1594" height="1.5" fill="#45464b"/><rect x="266" y="1332.65" width="1594" height="1.5" fill="#45464b"/><rect x="266" y="1403.85" width="1594" height="1.5" fill="#45464b"/><rect x="276.25" y="1052.8" width="1.5" height="351.79999999999995" fill="#45464b"/><rect x="409.10" y="1052.8" width="1.5" height="351.79999999999995" fill="#45464b"/><rect x="541.95" y="1052.8" width="1.5" height="351.79999999999995" fill="#45464b"/><rect x="674.80" y="1052.8" width="1.5" height="351.79999999999995" fill="#45464b"/><rect x="807.65" y="1052.8" width="1.5" height="351.79999999999995" fill="#45464b"/><rect x="940.50" y="1052.8" width="1.5" height="351.79999999999995" fill="#45464b"/><rect x="1073.35" y="1052.8" width="1.5" height="351.79999999999995" fill="#45464b"/><rect x="1206.20" y="1052.8" width="1.5" height="351.79999999999995" fill="#45464b"/><rect x="1339.05" y="1052.8" width="1.5" height="351.79999999999995" fill="#45464b"/><rect x="1471.90" y="1052.8" width="1.5" height="351.79999999999995" fill="#45464b"/><rect x="1604.75" y="1052.8" width="1.5" height="351.79999999999995" fill="#45464b"/><rect x="1737.60" y="1052.8" width="1.5" height="351.79999999999995" fill="#45464b"/><path d="M265.8,1097.7 L277.0,1097.7 L330.2,1102.9 L383.3,1107.7 L436.5,1106.4 L489.6,1106.7 L542.8,1105.8 L596.0,1105.1 L649.1,1107.2 L702.3,1109.6 L755.4,1108.5 L808.6,1108.0 L861.8,1109.6 L914.9,1109.0 L968.1,1108.8 L1021.2,1110.7 L1074.4,1109.6 L1127.6,1109.4 L1180.7,1109.0 L1233.9,1110.0 L1287.0,1108.0 L1340.2,1108.5 L1393.4,1109.0 L1446.5,1110.0 L1499.7,1110.7 L1552.8,1109.5 L1606.0,1108.6 L1659.2,1109.5 L1712.3,1111.2 L1765.5,1108.0 L1818.6,1119.7 L1818.6,1141.6 L1765.5,1130.5 L1712.3,1133.4 L1659.2,1132.5 L1606.0,1131.5 L1552.8,1131.5 L1499.7,1132.6 L1446.5,1132.0 L1393.4,1131.5 L1340.2,1131.3 L1287.0,1130.5 L1233.9,1131.8 L1180.7,1131.8 L1127.6,1131.8 L1074.4,1132.0 L1021.2,1132.6 L968.1,1131.3 L914.9,1131.5 L861.8,1132.6 L808.6,1130.0 L755.4,1132.6 L702.3,1132.6 L649.1,1129.6 L596.0,1127.5 L542.8,1127.9 L489.6,1129.2 L436.5,1128.7 L383.3,1130.1 L330.2,1125.3 L277.0,1119.8 L265.8,1119.8Z" fill="#705da0"/><path d="M265.8,1119.8 L277.0,1119.8 L330.2,1125.3 L383.3,1130.1 L436.5,1128.7 L489.6,1129.2 L542.8,1127.9 L596.0,1127.5 L649.1,1129.6 L702.3,1132.6 L755.4,1132.6 L808.6,1130.0 L861.8,1132.6 L914.9,1131.5 L968.1,1131.3 L1021.2,1132.6 L1074.4,1132.0 L1127.6,1131.8 L1180.7,1131.8 L1233.9,1131.8 L1287.0,1130.5 L1340.2,1131.3 L1393.4,1131.5 L1446.5,1132.0 L1499.7,1132.6 L1552.8,1131.5 L1606.0,1131.5 L1659.2,1132.5 L1712.3,1133.4 L1765.5,1130.5 L1818.6,1141.6 L1818.6,1152.0 L1765.5,1142.2 L1712.3,1144.2 L1659.2,1143.5 L1606.0,1143.0 L1552.8,1143.0 L1499.7,1143.7 L1446.5,1143.5 L1393.4,1143.0 L1340.2,1142.5 L1287.0,1141.6 L1233.9,1143.0 L1180.7,1143.0 L1127.6,1142.5 L1074.4,1142.2 L1021.2,1143.7 L968.1,1141.6 L914.9,1142.5 L861.8,1143.7 L808.6,1142.2 L755.4,1142.6 L702.3,1143.0 L649.1,1140.3 L596.0,1139.0 L542.8,1139.6 L489.6,1139.9 L436.5,1139.9 L383.3,1141.1 L330.2,1136.5 L277.0,1131.3 L265.8,1130.8Z" fill="#ba43a9"/><path d="M265.8,1130.8 L277.0,1131.3 L330.2,1136.5 L383.3,1141.1 L436.5,1139.9 L489.6,1139.9 L542.8,1139.6 L596.0,1139.0 L649.1,1140.3 L702.3,1143.0 L755.4,1142.6 L808.6,1142.2 L861.8,1143.7 L914.9,1142.5 L968.1,1141.6 L1021.2,1143.7 L1074.4,1142.2 L1127.6,1142.5 L1180.7,1143.0 L1233.9,1143.0 L1287.0,1141.6 L1340.2,1142.5 L1393.4,1143.0 L1446.5,1143.5 L1499.7,1143.7 L1552.8,1143.0 L1606.0,1143.0 L1659.2,1143.5 L1712.3,1144.2 L1765.5,1142.2 L1818.6,1152.0 L1818.6,1167.0 L1765.5,1158.0 L1712.3,1158.4 L1659.2,1158.4 L1606.0,1158.4 L1552.8,1158.4 L1499.7,1158.4 L1446.5,1158.4 L1393.4,1158.4 L1340.2,1158.4 L1287.0,1157.6 L1233.9,1158.4 L1180.7,1158.2 L1127.6,1158.4 L1074.4,1158.4 L1021.2,1158.4 L968.1,1158.4 L914.9,1158.4 L861.8,1158.4 L808.6,1158.4 L755.4,1158.4 L702.3,1157.6 L649.1,1154.5 L596.0,1155.1 L542.8,1155.4 L489.6,1155.4 L436.5,1156.3 L383.3,1155.7 L330.2,1151.1 L277.0,1147.1 L265.8,1146.8Z" fill="#1f78c1"/><path d="M265.8,1146.8 L277.0,1147.1 L330.2,1151.1 L383.3,1155.7 L436.5,1156.3 L489.6,1155.4 L542.8,1155.4 L596.0,1155.1 L649.1,1154.5 L702.3,1157.6 L755.4,1158.4 L808.6,1158.4 L861.8,1158.4 L914.9,1158.4 L968.1,1158.4 L1021.2,1158.4 L1074.4,1158.4 L1127.6,1158.4 L1180.7,1158.2 L1233.9,1158.4 L1287.0,1157.6 L1340.2,1158.4 L1393.4,1158.4 L1446.5,1158.4 L1499.7,1158.4 L1552.8,1158.4 L1606.0,1158.4 L1659.2,1158.4 L1712.3,1158.4 L1765.5,1158.0 L1818.6,1167.0 L1818.6,1273.8 L1765.5,1265.7 L1712.3,1265.5 L1659.2,1265.5 L1606.0,1265.5 L1552.8,1265.5 L1499.7,1265.5 L1446.5,1265.5 L1393.4,1265.5 L1340.2,1265.5 L1287.0,1265.5 L1233.9,1265.5 L1180.7,1265.5 L1127.6,1265.5 L1074.4,1265.5 L1021.2,1265.5 L968.1,1265.5 L914.9,1265.5 L861.8,1265.5 L808.6,1265.3 L755.4,1263.5 L702.3,1262.7 L649.1,1262.7 L596.0,1262.8 L542.8,1263.0 L489.6,1263.2 L436.5,1263.2 L383.3,1262.7 L330.2,1258.5 L277.0,1254.2 L265.8,1253.4Z" fill="#e24d42"/><path d="M265.8,1253.4 L277.0,1254.2 L330.2,1258.5 L383.3,1262.7 L436.5,1263.2 L489.6,1263.2 L542.8,1263.0 L596.0,1262.8 L649.1,1262.7 L702.3,1262.7 L755.4,1263.5 L808.6,1265.3 L861.8,1265.5 L914.9,1265.5 L968.1,1265.5 L1021.2,1265.5 L1074.4,1265.5 L1127.6,1265.5 L1180.7,1265.5 L1233.9,1265.5 L1287.0,1265.5 L1340.2,1265.5 L1393.4,1265.5 L1446.5,1265.5 L1499.7,1265.5 L1552.8,1265.5 L1606.0,1265.5 L1659.2,1265.5 L1712.3,1265.5 L1765.5,1265.7 L1818.6,1273.8 L1818.6,1297.1 L1765.5,1288.6 L1712.3,1288.5 L1659.2,1288.5 L1606.0,1288.5 L1552.8,1288.5 L1499.7,1288.5 L1446.5,1288.5 L1393.4,1288.5 L1340.2,1288.5 L1287.0,1288.5 L1233.9,1288.5 L1180.7,1288.5 L1127.6,1288.5 L1074.4,1288.5 L1021.2,1288.5 L968.1,1288.5 L914.9,1288.5 L861.8,1289.0 L808.6,1288.0 L755.4,1286.5 L702.3,1285.4 L649.1,1285.4 L596.0,1285.5 L542.8,1285.5 L489.6,1285.5 L436.5,1285.8 L383.3,1286.0 L330.2,1281.7 L277.0,1277.4 L265.8,1276.7Z" fill="#ef843c"/><path d="M265.8,1276.7 L277.0,1277.4 L330.2,1281.7 L383.3,1286.0 L436.5,1285.8 L489.6,1285.5 L542.8,1285.5 L596.0,1285.5 L649.1,1285.4 L702.3,1285.4 L755.4,1286.5 L808.6,1288.0 L861.8,1289.0 L914.9,1288.5 L968.1,1288.5 L1021.2,1288.5 L1074.4,1288.5 L1127.6,1288.5 L1180.7,1288.5 L1233.9,1288.5 L1287.0,1288.5 L1340.2,1288.5 L1393.4,1288.5 L1446.5,1288.5 L1499.7,1288.5 L1552.8,1288.5 L1606.0,1288.5 L1659.2,1288.5 L1712.3,1288.5 L1765.5,1288.6 L1818.6,1297.1 L1818.6,1341.4 L1765.5,1341.4 L1712.3,1341.4 L1659.2,1341.4 L1606.0,1341.4 L1552.8,1341.4 L1499.7,1341.4 L1446.5,1341.4 L1393.4,1341.4 L1340.2,1341.4 L1287.0,1341.4 L1233.9,1341.4 L1180.7,1341.4 L1127.6,1341.4 L1074.4,1341.4 L1021.2,1341.4 L968.1,1341.4 L914.9,1341.4 L861.8,1341.4 L808.6,1341.4 L755.4,1341.4 L702.3,1341.4 L649.1,1341.4 L596.0,1341.4 L542.8,1341.4 L489.6,1341.4 L436.5,1341.4 L383.3,1341.4 L330.2,1341.4 L277.0,1341.4 L265.8,1341.4Z" fill="#6ed0e0"/><path d="M265.8,1341.4 L277.0,1341.4 L330.2,1341.4 L383.3,1341.4 L436.5,1341.4 L489.6,1341.4 L542.8,1341.4 L596.0,1341.4 L649.1,1341.4 L702.3,1341.4 L755.4,1341.4 L808.6,1341.4 L861.8,1341.4 L914.9,1341.4 L968.1,1341.4 L1021.2,1341.4 L1074.4,1341.4 L1127.6,1341.4 L1180.7,1341.4 L1233.9,1341.4 L1287.0,1341.4 L1340.2,1341.4 L1393.4,1341.4 L1446.5,1341.4 L1499.7,1341.4 L1552.8,1341.4 L1606.0,1341.4 L1659.2,1341.4 L1712.3,1341.4 L1765.5,1341.4 L1818.6,1341.4 L1818.6,1404.3 L1765.5,1404.3 L1712.3,1404.3 L1659.2,1404.3 L1606.0,1404.3 L1552.8,1404.3 L1499.7,1404.3 L1446.5,1404.3 L1393.4,1404.3 L1340.2,1404.3 L1287.0,1404.3 L1233.9,1404.3 L1180.7,1404.3 L1127.6,1404.3 L1074.4,1404.3 L1021.2,1404.3 L968.1,1404.3 L914.9,1404.3 L861.8,1404.3 L808.6,1404.3 L755.4,1404.3 L702.3,1404.3 L649.1,1404.3 L596.0,1404.3 L542.8,1404.3 L489.6,1404.3 L436.5,1404.3 L383.3,1404.3 L330.2,1404.3 L277.0,1404.3 L265.8,1404.3Z" fill="#eab839"/><path d="M265.8,1119.8 L277.0,1119.8 L330.2,1125.3 L383.3,1130.1 L436.5,1128.7 L489.6,1129.2 L542.8,1127.9 L596.0,1127.5 L649.1,1129.6 L702.3,1132.6 L755.4,1132.6 L808.6,1130.0 L861.8,1132.6 L914.9,1131.5 L968.1,1131.3 L1021.2,1132.6 L1074.4,1132.0 L1127.6,1131.8 L1180.7,1131.8 L1233.9,1131.8 L1287.0,1130.5 L1340.2,1131.3 L1393.4,1131.5 L1446.5,1132.0 L1499.7,1132.6 L1552.8,1131.5 L1606.0,1131.5 L1659.2,1132.5 L1712.3,1133.4 L1765.5,1130.5 L1818.6,1141.6" fill="none" stroke="rgba(20,20,30,0.45)" stroke-width="0.9"/><path d="M265.8,1130.8 L277.0,1131.3 L330.2,1136.5 L383.3,1141.1 L436.5,1139.9 L489.6,1139.9 L542.8,1139.6 L596.0,1139.0 L649.1,1140.3 L702.3,1143.0 L755.4,1142.6 L808.6,1142.2 L861.8,1143.7 L914.9,1142.5 L968.1,1141.6 L1021.2,1143.7 L1074.4,1142.2 L1127.6,1142.5 L1180.7,1143.0 L1233.9,1143.0 L1287.0,1141.6 L1340.2,1142.5 L1393.4,1143.0 L1446.5,1143.5 L1499.7,1143.7 L1552.8,1143.0 L1606.0,1143.0 L1659.2,1143.5 L1712.3,1144.2 L1765.5,1142.2 L1818.6,1152.0" fill="none" stroke="rgba(20,20,30,0.45)" stroke-width="0.9"/><path d="M265.8,1146.8 L277.0,1147.1 L330.2,1151.1 L383.3,1155.7 L436.5,1156.3 L489.6,1155.4 L542.8,1155.4 L596.0,1155.1 L649.1,1154.5 L702.3,1157.6 L755.4,1158.4 L808.6,1158.4 L861.8,1158.4 L914.9,1158.4 L968.1,1158.4 L1021.2,1158.4 L1074.4,1158.4 L1127.6,1158.4 L1180.7,1158.2 L1233.9,1158.4 L1287.0,1157.6 L1340.2,1158.4 L1393.4,1158.4 L1446.5,1158.4 L1499.7,1158.4 L1552.8,1158.4 L1606.0,1158.4 L1659.2,1158.4 L1712.3,1158.4 L1765.5,1158.0 L1818.6,1167.0" fill="none" stroke="rgba(20,20,30,0.45)" stroke-width="0.9"/><path d="M265.8,1253.4 L277.0,1254.2 L330.2,1258.5 L383.3,1262.7 L436.5,1263.2 L489.6,1263.2 L542.8,1263.0 L596.0,1262.8 L649.1,1262.7 L702.3,1262.7 L755.4,1263.5 L808.6,1265.3 L861.8,1265.5 L914.9,1265.5 L968.1,1265.5 L1021.2,1265.5 L1074.4,1265.5 L1127.6,1265.5 L1180.7,1265.5 L1233.9,1265.5 L1287.0,1265.5 L1340.2,1265.5 L1393.4,1265.5 L1446.5,1265.5 L1499.7,1265.5 L1552.8,1265.5 L1606.0,1265.5 L1659.2,1265.5 L1712.3,1265.5 L1765.5,1265.7 L1818.6,1273.8" fill="none" stroke="rgba(20,20,30,0.45)" stroke-width="0.9"/><path d="M265.8,1276.7 L277.0,1277.4 L330.2,1281.7 L383.3,1286.0 L436.5,1285.8 L489.6,1285.5 L542.8,1285.5 L596.0,1285.5 L649.1,1285.4 L702.3,1285.4 L755.4,1286.5 L808.6,1288.0 L861.8,1289.0 L914.9,1288.5 L968.1,1288.5 L1021.2,1288.5 L1074.4,1288.5 L1127.6,1288.5 L1180.7,1288.5 L1233.9,1288.5 L1287.0,1288.5 L1340.2,1288.5 L1393.4,1288.5 L1446.5,1288.5 L1499.7,1288.5 L1552.8,1288.5 L1606.0,1288.5 L1659.2,1288.5 L1712.3,1288.5 L1765.5,1288.6 L1818.6,1297.1" fill="none" stroke="rgba(20,20,30,0.45)" stroke-width="0.9"/><path d="M265.8,1341.4 L277.0,1341.4 L330.2,1341.4 L383.3,1341.4 L436.5,1341.4 L489.6,1341.4 L542.8,1341.4 L596.0,1341.4 L649.1,1341.4 L702.3,1341.4 L755.4,1341.4 L808.6,1341.4 L861.8,1341.4 L914.9,1341.4 L968.1,1341.4 L1021.2,1341.4 L1074.4,1341.4 L1127.6,1341.4 L1180.7,1341.4 L1233.9,1341.4 L1287.0,1341.4 L1340.2,1341.4 L1393.4,1341.4 L1446.5,1341.4 L1499.7,1341.4 L1552.8,1341.4 L1606.0,1341.4 L1659.2,1341.4 L1712.3,1341.4 L1765.5,1341.4 L1818.6,1341.4" fill="none" stroke="rgba(20,20,30,0.45)" stroke-width="0.9"/><text x="166.70" y="1059.1" font-size="25.2" fill="#ccccdc" font-weight="normal" font-style="normal" text-anchor="start" textLength="88.00" lengthAdjust="spacingAndGlyphs"  stroke="#ccccdc" stroke-width="0.71">1.16 GiB</text><text x="168.50" y="1129.3" font-size="25.2" fill="#ccccdc" font-weight="normal" font-style="normal" text-anchor="start" textLength="86.20" lengthAdjust="spacingAndGlyphs"  stroke="#ccccdc" stroke-width="0.71">954 MiB</text><text x="168.50" y="1199.5" font-size="25.2" fill="#ccccdc" font-weight="normal" font-style="normal" text-anchor="start" textLength="86.20" lengthAdjust="spacingAndGlyphs"  stroke="#ccccdc" stroke-width="0.71">715 MiB</text><text x="168.50" y="1269.5" font-size="25.2" fill="#ccccdc" font-weight="normal" font-style="normal" text-anchor="start" textLength="86.20" lengthAdjust="spacingAndGlyphs"  stroke="#ccccdc" stroke-width="0.71">477 MiB</text><text x="168.50" y="1339.7" font-size="25.2" fill="#ccccdc" font-weight="normal" font-style="normal" text-anchor="start" textLength="86.20" lengthAdjust="spacingAndGlyphs"  stroke="#ccccdc" stroke-width="0.71">238 MiB</text><text x="222.20" y="1410.8999999999999" font-size="25.2" fill="#ccccdc" font-weight="normal" font-style="normal" text-anchor="start" textLength="32.50" lengthAdjust="spacingAndGlyphs"  stroke="#ccccdc" stroke-width="0.71">0 B</text><text x="248.50" y="1440" font-size="23.5" fill="#ccccdc" font-weight="normal" font-style="normal" text-anchor="start" textLength="57.00" lengthAdjust="spacingAndGlyphs"  stroke="#ccccdc" stroke-width="0.66">10:10</text><text x="381.35" y="1440" font-size="23.5" fill="#ccccdc" font-weight="normal" font-style="normal" text-anchor="start" textLength="57.00" lengthAdjust="spacingAndGlyphs"  stroke="#ccccdc" stroke-width="0.66">10:15</text><text x="514.20" y="1440" font-size="23.5" fill="#ccccdc" font-weight="normal" font-style="normal" text-anchor="start" textLength="57.00" lengthAdjust="spacingAndGlyphs"  stroke="#ccccdc" stroke-width="0.66">10:20</text><text x="647.05" y="1440" font-size="23.5" fill="#ccccdc" font-weight="normal" font-style="normal" text-anchor="start" textLength="57.00" lengthAdjust="spacingAndGlyphs"  stroke="#ccccdc" stroke-width="0.66">10:25</text><text x="779.90" y="1440" font-size="23.5" fill="#ccccdc" font-weight="normal" font-style="normal" text-anchor="start" textLength="57.00" lengthAdjust="spacingAndGlyphs"  stroke="#ccccdc" stroke-width="0.66">10:30</text><text x="912.75" y="1440" font-size="23.5" fill="#ccccdc" font-weight="normal" font-style="normal" text-anchor="start" textLength="57.00" lengthAdjust="spacingAndGlyphs"  stroke="#ccccdc" stroke-width="0.66">10:35</text><text x="1045.60" y="1440" font-size="23.5" fill="#ccccdc" font-weight="normal" font-style="normal" text-anchor="start" textLength="57.00" lengthAdjust="spacingAndGlyphs"  stroke="#ccccdc" stroke-width="0.66">10:40</text><text x="1178.45" y="1440" font-size="23.5" fill="#ccccdc" font-weight="normal" font-style="normal" text-anchor="start" textLength="57.00" lengthAdjust="spacingAndGlyphs"  stroke="#ccccdc" stroke-width="0.66">10:45</text><text x="1311.30" y="1440" font-size="23.5" fill="#ccccdc" font-weight="normal" font-style="normal" text-anchor="start" textLength="57.00" lengthAdjust="spacingAndGlyphs"  stroke="#ccccdc" stroke-width="0.66">10:50</text><text x="1444.15" y="1440" font-size="23.5" fill="#ccccdc" font-weight="normal" font-style="normal" text-anchor="start" textLength="57.00" lengthAdjust="spacingAndGlyphs"  stroke="#ccccdc" stroke-width="0.66">10:55</text><text x="1577.00" y="1440" font-size="23.5" fill="#ccccdc" font-weight="normal" font-style="normal" text-anchor="start" textLength="57.00" lengthAdjust="spacingAndGlyphs"  stroke="#ccccdc" stroke-width="0.66">11:00</text><text x="1709.85" y="1440" font-size="23.5" fill="#ccccdc" font-weight="normal" font-style="normal" text-anchor="start" textLength="57.00" lengthAdjust="spacingAndGlyphs"  stroke="#ccccdc" stroke-width="0.66">11:05</text><clipPath id="lg1"><rect x="1890" y="364" width="600" height="401.5"/></clipPath><g clip-path="url(#lg1)"><rect x="1906" y="388" width="28" height="8" rx="2" fill="#f2495c"/><text x="1952.50" y="398" font-size="24.5" fill="#8e8e99" font-weight="normal" font-style="normal" text-anchor="start" textLength="146.10" lengthAdjust="spacingAndGlyphs"  stroke="#8e8e99" stroke-width="0.69">max capacity</text><rect x="1902" y="416" width="560" height="52" fill="#202226"/><rect x="1906" y="440" width="28" height="8" rx="2" fill="#eab839"/><text x="1952.50" y="450" font-size="24.5" fill="#ccccdc" font-weight="normal" font-style="normal" text-anchor="start" textLength="477.00" lengthAdjust="spacingAndGlyphs"  stroke="#ccccdc" stroke-width="0.69">argocd-redis-ha-haproxy-6cdbb584b6-z72nt</text><rect x="1906" y="492" width="28" height="8" rx="2" fill="#6ed0e0"/><text x="1952.50" y="502" font-size="24.5" fill="#ccccdc" font-weight="normal" font-style="normal" text-anchor="start" textLength="266.10" lengthAdjust="spacingAndGlyphs"  stroke="#ccccdc" stroke-width="0.69">argocd-redis-ha-server-0</text><rect x="1902" y="520" width="560" height="52" fill="#202226"/><rect x="1906" y="544" width="28" height="8" rx="2" fill="#ef843c"/><text x="1952.50" y="554" font-size="24.5" fill="#ccccdc" font-weight="normal" font-style="normal" text-anchor="start" textLength="240.70" lengthAdjust="spacingAndGlyphs"  stroke="#ccccdc" stroke-width="0.69">hcloud-csi-node-lwfx4</text><rect x="1906" y="596" width="28" height="8" rx="2" fill="#e24d42"/><text x="1952.50" y="606" font-size="24.5" fill="#ccccdc" font-weight="normal" font-style="normal" text-anchor="start" textLength="324.50" lengthAdjust="spacingAndGlyphs"  stroke="#ccccdc" stroke-width="0.69">ingress-nginx-controller-hdxld</text><rect x="1902" y="624" width="560" height="52" fill="#202226"/><rect x="1906" y="648" width="28" height="8" rx="2" fill="#1f78c1"/><text x="1952.50" y="658" font-size="24.5" fill="#ccccdc" font-weight="normal" font-style="normal" text-anchor="start" textLength="227.70" lengthAdjust="spacingAndGlyphs"  stroke="#ccccdc" stroke-width="0.69">node-exporter-9dgcc</text><rect x="1906" y="700" width="28" height="8" rx="2" fill="#ba43a9"/><text x="1952.50" y="710" font-size="24.5" fill="#ccccdc" font-weight="normal" font-style="normal" text-anchor="start" textLength="313.60" lengthAdjust="spacingAndGlyphs"  stroke="#ccccdc" stroke-width="0.69">node-problem-detector-kfcqr</text><rect x="1902" y="728" width="560" height="52" fill="#202226"/><rect x="1906" y="752" width="28" height="8" rx="2" fill="#705da0"/><text x="1952.50" y="762" font-size="24.5" fill="#ccccdc" font-weight="normal" font-style="normal" text-anchor="start" textLength="501.00" lengthAdjust="spacingAndGlyphs"  stroke="#ccccdc" stroke-width="0.69">system-upgrade-controller-7cfb4c4995-8p892</text></g><clipPath id="lg2"><rect x="1890" y="1048.2" width="600" height="401.5999999999999"/></clipPath><g clip-path="url(#lg2)"><rect x="1906" y="1072.2" width="28" height="8" rx="2" fill="#f2495c"/><text x="1952.50" y="1082.2" font-size="24.5" fill="#8e8e99" font-weight="normal" font-style="normal" text-anchor="start" textLength="146.10" lengthAdjust="spacingAndGlyphs"  stroke="#8e8e99" stroke-width="0.69">max capacity</text><rect x="1902" y="1100.2" width="560" height="52" fill="#202226"/><rect x="1906" y="1124.2" width="28" height="8" rx="2" fill="#eab839"/><text x="1952.50" y="1134.2" font-size="24.5" fill="#ccccdc" font-weight="normal" font-style="normal" text-anchor="start" textLength="477.00" lengthAdjust="spacingAndGlyphs"  stroke="#ccccdc" stroke-width="0.69">argocd-redis-ha-haproxy-6cdbb584b6-z72nt</text><rect x="1906" y="1176.2" width="28" height="8" rx="2" fill="#6ed0e0"/><text x="1952.50" y="1186.2" font-size="24.5" fill="#ccccdc" font-weight="normal" font-style="normal" text-anchor="start" textLength="266.10" lengthAdjust="spacingAndGlyphs"  stroke="#ccccdc" stroke-width="0.69">argocd-redis-ha-server-0</text><rect x="1902" y="1204.2" width="560" height="52" fill="#202226"/><rect x="1906" y="1228.2" width="28" height="8" rx="2" fill="#ef843c"/><text x="1952.50" y="1238.2" font-size="24.5" fill="#ccccdc" font-weight="normal" font-style="normal" text-anchor="start" textLength="240.70" lengthAdjust="spacingAndGlyphs"  stroke="#ccccdc" stroke-width="0.69">hcloud-csi-node-lwfx4</text><rect x="1906" y="1280.2" width="28" height="8" rx="2" fill="#e24d42"/><text x="1952.50" y="1290.2" font-size="24.5" fill="#ccccdc" font-weight="normal" font-style="normal" text-anchor="start" textLength="324.50" lengthAdjust="spacingAndGlyphs"  stroke="#ccccdc" stroke-width="0.69">ingress-nginx-controller-hdxld</text><rect x="1902" y="1308.2" width="560" height="52" fill="#202226"/><rect x="1906" y="1332.2" width="28" height="8" rx="2" fill="#1f78c1"/><text x="1952.50" y="1342.2" font-size="24.5" fill="#ccccdc" font-weight="normal" font-style="normal" text-anchor="start" textLength="227.70" lengthAdjust="spacingAndGlyphs"  stroke="#ccccdc" stroke-width="0.69">node-exporter-9dgcc</text><rect x="1906" y="1384.2" width="28" height="8" rx="2" fill="#ba43a9"/><text x="1952.50" y="1394.2" font-size="24.5" fill="#ccccdc" font-weight="normal" font-style="normal" text-anchor="start" textLength="313.60" lengthAdjust="spacingAndGlyphs"  stroke="#ccccdc" stroke-width="0.69">node-problem-detector-kfcqr</text><rect x="1902" y="1412.2" width="560" height="52" fill="#202226"/><rect x="1906" y="1436.2" width="28" height="8" rx="2" fill="#705da0"/><text x="1952.50" y="1446.2" font-size="24.5" fill="#ccccdc" font-weight="normal" font-style="normal" text-anchor="start" textLength="501.00" lengthAdjust="spacingAndGlyphs"  stroke="#ccccdc" stroke-width="0.69">system-upgrade-controller-7cfb4c4995-8p892</text></g><rect x="148" y="1626" width="2340" height="4.1" fill="#111217"/><rect x="148" y="1630.1" width="2340" height="48" fill="#22252b"/><rect x="148" y="1678.1" width="2340" height="3.9" fill="#111217"/><text x="178.20" y="1664.1" font-size="30" fill="#33a2e5" font-weight="bold" font-style="normal" text-anchor="start" textLength="49.10" lengthAdjust="spacingAndGlyphs" >Pod</text><text x="924.60" y="1664.1" font-size="30" fill="#33a2e5" font-weight="bold" font-style="normal" text-anchor="start" textLength="192.80" lengthAdjust="spacingAndGlyphs" >Memory Usage</text><text x="1184.50" y="1664.1" font-size="30" fill="#33a2e5" font-weight="bold" font-style="normal" text-anchor="start" textLength="231.50" lengthAdjust="spacingAndGlyphs" >Memory Requests</text><text x="1483.80" y="1664.1" font-size="30" fill="#33a2e5" font-weight="bold" font-style="normal" text-anchor="start" textLength="260.50" lengthAdjust="spacingAndGlyphs" >Memory Requests %</text><text x="1811.40" y="1664.1" font-size="30" fill="#33a2e5" font-weight="bold" font-style="normal" text-anchor="start" textLength="271.90" lengthAdjust="spacingAndGlyphs" >Memory Usage (RSS)</text><text x="2150.50" y="1664.1" font-size="30" fill="#33a2e5" font-weight="bold" font-style="normal" text-anchor="start" textLength="301.20" lengthAdjust="spacingAndGlyphs" >Memory Usage (Cache)</text><rect x="892.2" y="1688.2" width="3.7" height="50" fill="#111217"/><rect x="1152" y="1688.2" width="3.7" height="50" fill="#111217"/><rect x="1452.3" y="1688.2" width="3.7" height="50" fill="#111217"/><rect x="1780.3" y="1688.2" width="3.7" height="50" fill="#111217"/><rect x="2118.3" y="1688.2" width="3.7" height="50" fill="#111217"/><text x="177.50" y="1729.3" font-size="29" fill="#ccccdc" font-weight="normal" font-style="normal" text-anchor="start" textLength="582.00" lengthAdjust="spacingAndGlyphs"  stroke="#ccccdc" stroke-width="0.81">system-upgrade-controller-7cfb4c4995-8p892</text><text x="926.40" y="1729.3" font-size="29" fill="#ccccdc" font-weight="normal" font-style="normal" text-anchor="start" textLength="127.20" lengthAdjust="spacingAndGlyphs"  stroke="#ccccdc" stroke-width="0.81">75.48 MiB</text><text x="1185.90" y="1729.3" font-size="29" fill="#ccccdc" font-weight="normal" font-style="normal" text-anchor="start"  stroke="#ccccdc" stroke-width="0.81">-</text><text x="1483.00" y="1729.3" font-size="29" fill="#ccccdc" font-weight="normal" font-style="normal" text-anchor="start"  stroke="#ccccdc" stroke-width="0.81">-</text><text x="1814.00" y="1729.3" font-size="29" fill="#ccccdc" font-weight="normal" font-style="normal" text-anchor="start" textLength="128.50" lengthAdjust="spacingAndGlyphs"  stroke="#ccccdc" stroke-width="0.81">51.46 MiB</text><text x="2153.00" y="1729.3" font-size="29" fill="#ccccdc" font-weight="normal" font-style="normal" text-anchor="start" textLength="128.60" lengthAdjust="spacingAndGlyphs"  stroke="#ccccdc" stroke-width="0.81">31.49 MiB</text></svg></body></html>
